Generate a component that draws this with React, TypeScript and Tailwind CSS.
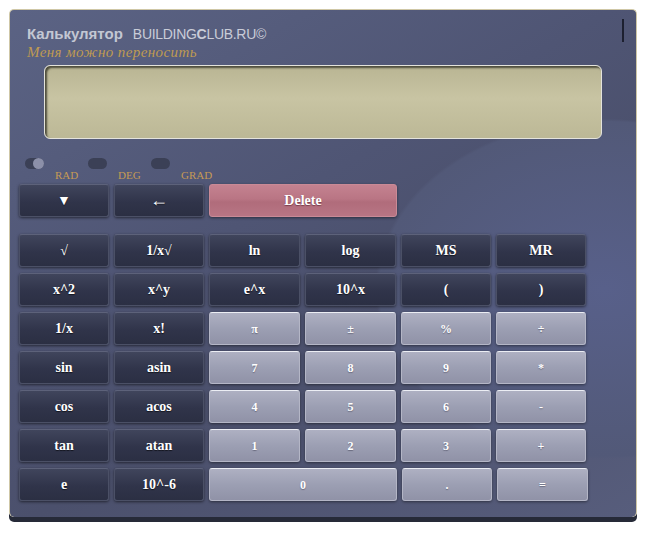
import React from "react"

const dark =
    "h-[33px] rounded-[3px] border border-[#4b5066] border-t-[#5d627a] bg-[linear-gradient(#40455c,#30344a_55%,#2b2f43)] shadow-[0_1px_3px_rgba(0,0,0,0.55)] text-white text-[14px] font-bold flex items-center justify-center [text-shadow:0_1px_1px_rgba(0,0,0,0.6)]"
const light =
    "h-[33px] rounded-[3px] border border-[#b4b6c6] border-t-[#eceef4] bg-[linear-gradient(#aeb0c2,#9c9fb3_50%,#9092a7)] shadow-[0_1px_3px_rgba(0,0,0,0.45)] text-white text-[12px] font-bold flex items-center justify-center [text-shadow:0_1px_1px_rgba(60,60,80,0.5)]"

const rows: [string, boolean][][] = [
    [["√", true], ["1/x√", true], ["ln", true], ["log", true], ["MS", true], ["MR", true]],
    [["x^2", true], ["x^y", true], ["e^x", true], ["10^x", true], ["(", true], [")", true]],
    [["1/x", true], ["x!", true], ["π", false], ["±", false], ["%", false], ["÷", false]],
    [["sin", true], ["asin", true], ["7", false], ["8", false], ["9", false], ["*", false]],
    [["cos", true], ["acos", true], ["4", false], ["5", false], ["6", false], ["-", false]],
    [["tan", true], ["atan", true], ["1", false], ["2", false], ["3", false], ["+", false]],
]

export default function App() {
    return (
        <div className="w-[648px] h-[534px] bg-white pt-[9px] pl-[9px] font-['Liberation_Serif',serif]">
            <div className="relative w-[628px] h-[508px] rounded-[5px] border border-[#cfc7a6] border-b-0 bg-[radial-gradient(ellipse_60%_55%_at_95%_55%,#58608a_0%,#525978_60%,transparent_61%),linear-gradient(150deg,#5b6384_0%,#4f5574_40%,#4b506c_60%,#575d7c_100%)] shadow-[0_5px_0_#262a38]">
                {/* drag handle */}
                <div className="absolute right-[12px] top-[9px] w-[2px] h-[23px] bg-[#1d2030]" />

                {/* Header */}
                <div className="pl-[17px] pt-[14px]">
                    <div className="flex items-baseline gap-[10px] leading-[20px]">
                        <span className="font-['Liberation_Sans',sans-serif] text-[15px] font-bold text-[#c3c7d3]">Калькулятор</span>
                        <span className="font-['Liberation_Sans',sans-serif] text-[14px] text-[#c9ccd8] tracking-[-0.3px]">
                            BUILDING<span className="font-bold">C</span>LUB.RU©
                        </span>
                    </div>
                    <div className="text-[15px] italic text-[#bf9a52] leading-[16px] tracking-[0.4px]">Меня можно переносить</div>
                </div>

                {/* Display */}
                <div className="ml-[34px] mt-[5px] w-[558px] h-[74px] rounded-[6px] border border-[#e4e3dc] bg-[linear-gradient(#b9b593,#c8c4a3_45%,#bcb896)] shadow-[inset_2px_2px_2px_rgba(40,40,30,0.75)]" />

                {/* Modes */}
                <div className="flex ml-[15px] mt-[19px]">
                    {["RAD", "DEG", "GRAD"].map((m, i) => (
                        <div key={m} className="w-[63px] flex flex-col">
                            <div className="relative w-[19px] h-[11px] rounded-full bg-[#3b4056]">
                                {i === 0 && <div className="absolute right-0 top-0 w-[11px] h-[11px] rounded-full bg-[#8c90a9]" />}
                            </div>
                            <div className="ml-[30px] text-[11px] leading-[12px] text-[#c59a55]">{m}</div>
                        </div>
                    ))}
                </div>

                {/* Top controls */}
                <div className="flex gap-[5px] ml-[9px] mt-[3px]">
                    <div className={dark + " w-[90px]"}>▼</div>
                    <div className={dark + " w-[90px] text-[18px]"}>←</div>
                    <div className="w-[188px] h-[33px] rounded-[3px] border border-[#c98a96] bg-[linear-gradient(#c48290,#b97584_45%,#b06c7b_55%,#b87584)] shadow-[0_1px_3px_rgba(0,0,0,0.45)] text-white text-[14px] font-bold flex items-center justify-center [text-shadow:0_1px_1px_rgba(80,30,40,0.6)]">
                        Delete
                    </div>
                </div>

                {/* Keys */}
                <div className="ml-[9px] mt-[17px] grid grid-cols-[90px_90px_91px_91px_90px_90px] gap-x-[5px] gap-y-[6px]">
                    {rows.flat().map(([k, d], i) => (
                        <div key={i} className={d ? dark : light}>{k}</div>
                    ))}
                </div>
                <div className="ml-[9px] mt-[6px] flex gap-[5px]">
                    <div className={dark + " w-[90px]"}>e</div>
                    <div className={dark + " w-[90px]"}>10^-6</div>
                    <div className={light + " w-[188px]"}>0</div>
                    <div className={light + " w-[90px]"}>.</div>
                    <div className={light + " w-[91px]"}>=</div>
                </div>
            </div>
        </div>
    )
}
